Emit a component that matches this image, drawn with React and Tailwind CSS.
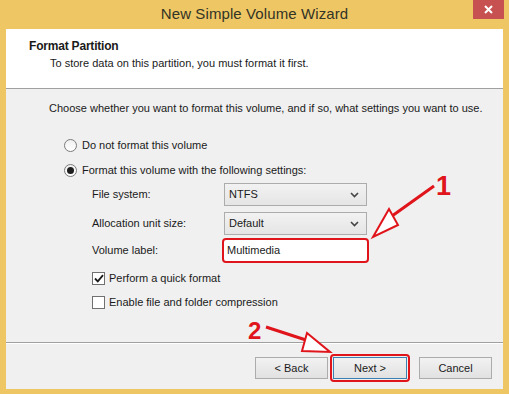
import React from 'react';

function Chevron() {
  return (
    <svg width="9" height="6" viewBox="0 0 9 6" className="shrink-0">
      <path d="M1 1 L4.5 4.5 L8 1" fill="none" stroke="#444" strokeWidth="1.6" />
    </svg>
  );
}

function Select({ value }) {
  return (
    <div className="w-[143px] h-[23px] border border-[#acacac] bg-gradient-to-b from-[#f2f2f2] to-[#e5e5e5] flex items-center justify-between pl-[4px] pr-[7px]">
      <span>{value}</span>
      <Chevron />
    </div>
  );
}

function Radio({ checked, label }) {
  return (
    <div className="flex items-center h-[25px]">
      <div className="w-[13px] h-[13px] rounded-full border border-[#7a7a7a] bg-gradient-to-b from-[#f0f0f0] to-white flex items-center justify-center">
        {checked && <div className="w-[7px] h-[7px] rounded-full bg-[#1e1e1e]" />}
      </div>
      <span className="ml-[5px]">{label}</span>
    </div>
  );
}

function Check({ checked, label }) {
  return (
    <div className="flex items-center h-[24px]">
      <div className="w-[13px] h-[13px] border border-[#707070] bg-white flex items-center justify-center">
        {checked && (
          <svg width="10" height="9" viewBox="0 0 10 9">
            <path d="M1 4.5 L3.8 7.3 L9 1.2" fill="none" stroke="#1a1a1a" strokeWidth="1.8" />
          </svg>
        )}
      </div>
      <span className="ml-[4px]">{label}</span>
    </div>
  );
}

function Button({ children, focused }) {
  return (
    <div
      className={
        'h-[22px] border flex items-center justify-center bg-gradient-to-b from-[#f2f2f2] to-[#e1e1e1] ' +
        (focused ? 'w-[74px] border-[#3c7fb1]' : 'w-[73px] border-[#acacac]')
      }
    >
      {children}
    </div>
  );
}

export default function App() {
  return (
    <div className="relative w-[509px] h-[394px] bg-[#eec764] flex flex-col text-[11px] text-[#1a1a1a] font-['Liberation_Sans',Arial,sans-serif] overflow-hidden">
      {/* title bar */}
      <div className="relative h-[29px] flex items-center justify-center">
        <span className="text-[15px] text-[#333326] tracking-[0.1px] mt-[-1px]">New Simple Volume Wizard</span>
        <div className="absolute right-[5px] top-0 w-[31px] h-[19px] bg-[#c75050] flex items-center justify-center">
          <svg width="9" height="9" viewBox="0 0 9 9">
            <path d="M1 1 L8 8 M8 1 L1 8" stroke="white" strokeWidth="2" />
          </svg>
        </div>
      </div>

      {/* client */}
      <div className="flex-1 mx-[6px] mb-[5px] bg-[#f0f0f0] flex flex-col">
        <div className="h-[60px] bg-white border-b border-[#a0a0a0] pl-[23px] pt-[10px]">
          <div className="font-bold text-[12px] leading-[14px] tracking-[-0.2px]">Format Partition</div>
          <div className="pl-[21px] mt-[3px] leading-[14px]">To store data on this partition, you must format it first.</div>
        </div>

        <div className="flex-1 pl-[43px] pt-[12px]">
          <div className="leading-[14px]">Choose whether you want to format this volume, and if so, what settings you want to use.</div>
          <div className="pl-[15px] mt-[18px]">
            <Radio label="Do not format this volume" />
            <Radio checked label="Format this volume with the following settings:" />
            <div className="pl-[28px] mt-[-3px] flex flex-col">
              <div className="flex items-center h-[29px]">
                <span className="w-[132px]">File system:</span>
                <Select value="NTFS" />
              </div>
              <div className="flex items-center h-[29px]">
                <span className="w-[132px]">Allocation unit size:</span>
                <Select value="Default" />
              </div>
              <div className="flex items-center h-[24px]">
                <span className="w-[130px]">Volume label:</span>
                <div className="w-[147px] h-[25px] shrink-0 rounded-[4px] border-2 border-[#e0141b] bg-white flex items-center pl-[3px]">
                  Multimedia
                </div>
              </div>
              <div className="mt-[4px]">
                <Check checked label="Perform a quick format" />
                <Check label="Enable file and folder compression" />
              </div>
            </div>
          </div>
        </div>

        <div className="h-[47px] border-t border-[#a0a0a0] shadow-[inset_0_1px_0_#ffffff] flex items-start justify-end pr-[11px] pt-[14px]">
          <Button>&lt; Back</Button>
          <div className="ml-[2px] mt-[-3px] p-[1px] border-2 border-[#e0141b] rounded-[4px]">
            <Button focused>Next &gt;</Button>
          </div>
          <div className="ml-[9px]">
            <Button>Cancel</Button>
          </div>
        </div>
      </div>

      {/* annotations */}
      <svg className="absolute left-0 top-0 pointer-events-none" width="509" height="394">
        <text x="436" y="195" fill="#e0141b" fontSize="27" fontWeight="bold" fontFamily="Liberation Sans, Arial, sans-serif">1</text>
        <path d="M434 186 L392 216" stroke="#e0141b" strokeWidth="3" fill="none" />
        <path d="M389 209 L373 237 L398 225 Z" fill="white" stroke="#e0141b" strokeWidth="2" strokeLinejoin="miter" />
        <text x="248" y="339" fill="#e0141b" fontSize="24" fontWeight="bold" fontFamily="Liberation Sans, Arial, sans-serif">2</text>
        <path d="M266 327 L309 341" stroke="#e0141b" strokeWidth="3" fill="none" />
        <path d="M307 333 L330 352 L302 351 Z" fill="white" stroke="#e0141b" strokeWidth="2" />
      </svg>
    </div>
  );
}
